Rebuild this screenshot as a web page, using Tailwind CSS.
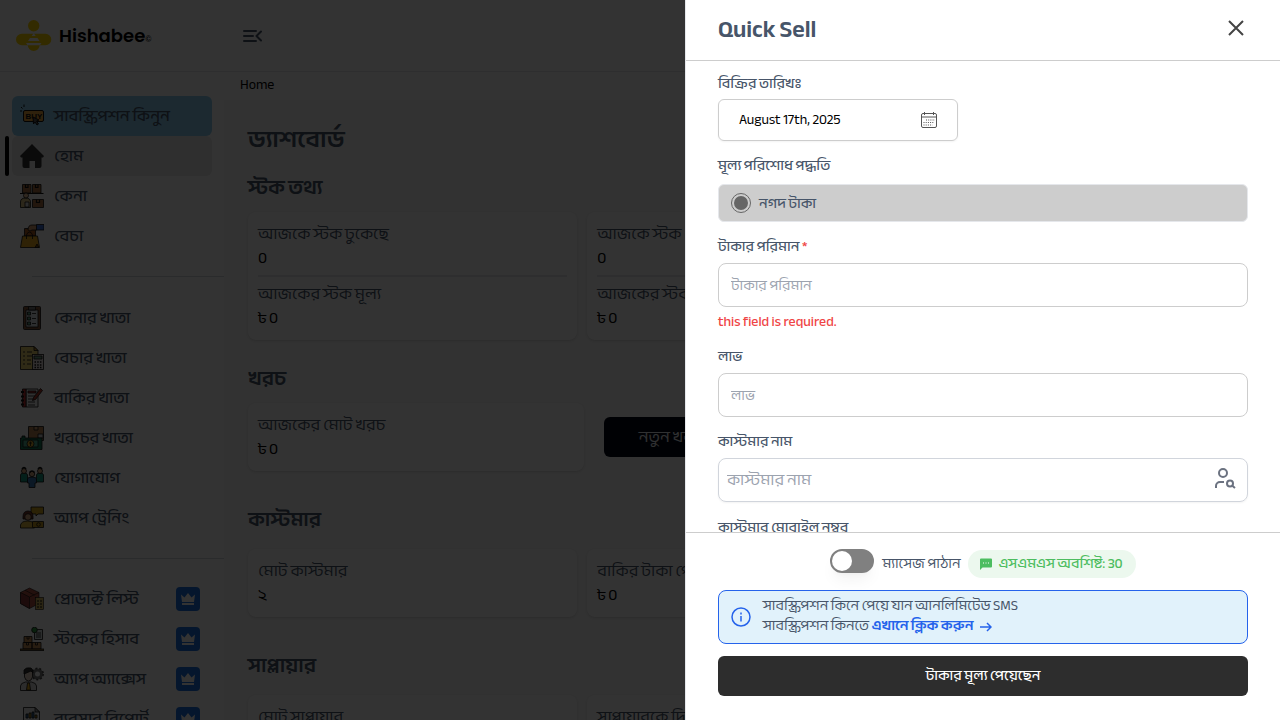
<!DOCTYPE html>
<html lang="bn">
<head>
<meta charset="utf-8">
<meta name="viewport" content="width=device-width, initial-scale=1">
<title>Hishabee</title>
<script src="https://cdn.jsdelivr.net/npm/@tailwindcss/browser@4"></script>
</head>
<body class="h-screen overflow-hidden bg-white font-['Anek_Bangla','Noto_Sans_Bengali','Open_Sans',sans-serif] text-black">

<svg class="hidden" aria-hidden="true">
  <symbol id="crown" viewBox="0 0 24 24">
    <path fill="#fff" d="M5 7.500l3.500 3L12 6l3.500 4.500 3.500-3L18 15H6zM6 16h12v2H6z"/>
  </symbol>
</svg>

<div class="flex h-full flex-col" aria-hidden="true">
  <header class="flex h-[72px] shrink-0 items-center border-b border-gray-200">
    <div class="flex w-[224px] items-center gap-[7px] pl-4">
      <svg class="h-8 w-9" viewBox="0 0 36 32">
        <g fill="#ffd500"><circle cx="17.700" cy="5.700" r="5.700"/><path d="M5.800 13.700h23.700a5.800 5.800 0 0 1 0 11.600H5.800a5.800 5.800 0 0 1 0-11.600z"/><path d="M11.700 25h12a6 6 0 0 1-12 0z"/></g>
        <g fill="#fff"><path d="M17.700 13l2 3h-4zM14 18h7.500l2 3h-11.500zM10 23h15.500l-1.500 2.300H11.500z"/></g>
      </svg>
      <span class="pt-1 font-['Poppins','Lato',sans-serif] text-lg font-semibold leading-8">Hishabee<span class="text-[8px] font-normal">©</span></span>
    </div>
    <button class="ml-[18px]" aria-label="Menu">
      <svg class="size-5" viewBox="0 0 20 20" fill="none" stroke="#475569" stroke-width="2" stroke-linecap="round" stroke-linejoin="round"><path d="M2 5h12M2 10h9M2 15h12M19 5.500L14.500 10l4.500 4.500"/></svg>
    </button>
  </header>

  <div class="flex min-h-0 flex-1">
    <nav class="w-56 shrink-0 overflow-hidden pt-6 text-base font-medium text-[#475569]">
      <div class="flex flex-col pr-3">
        <a href="#" class="ml-3 flex h-10 items-center gap-2.5 rounded-md bg-[#8bcdf0] pl-2">
          <svg class="size-6" viewBox="0 0 24 24"><rect x="3.500" y="6.500" width="20" height="11" rx="1.500" fill="#e8a33c" stroke="#111" /><path d="M1 3l1.500 1.500M4 0.500v2.500M0 7h2" stroke="#111"/><text x="5.500" y="15" font-family="Liberation Sans" font-weight="700" font-size="8" fill="#111">BUY</text><path d="M13 13l6 3-2.500 1 2 3-1.500 1-2-3-1.500 2z" fill="#555" stroke="#111"/></svg>
          সাবস্ক্রিপশন কিনুন</a>
        <div class="flex pl-[5px]">
          <span class="mr-[3px] w-1 rounded bg-black"></span>
          <a href="#" class="flex h-10 flex-1 items-center gap-2.5 rounded-md bg-[#e9e9e9] pl-2">
            <svg class="size-6" viewBox="0 0 24 24"><path fill="#333" d="M12 0l12 12-1 1.500h-1.500V22q0 2-2 2H15v-7H9.500v7h-5q-2 0-2-2v-8.500H1L0 12z"/></svg>
            হোম</a>
        </div>
        <a href="#" class="ml-3 flex h-10 items-center gap-2.5 pl-2">
          <svg class="size-6" viewBox="0 0 24 24" stroke="#111" stroke-width=".8"><path fill="#a87040" d="M2.500.500h8.500V9H2.500zM12.500.500H21V9h-8.500zM12.500 15.500h11v8h-11z"/><path d="M5.500.500v3h2.500v-3M15.500.500v3H18v-3M16.500 15.500v3h3v-3M0 9.500h23.500" fill="none" stroke-width="1.200"/><path fill="#d9c080" d="M.500 23.500V18q0-4 5-4t5 4v5.500z"/><circle cx="6" cy="11.500" r="2.500" fill="#e8c39a"/><path fill="#ddd" d="M5 18h4v5H5z"/></svg>
          কেনা</a>
        <a href="#" class="ml-3 flex h-10 items-center gap-2.5 pl-2">
          <svg class="size-6" viewBox="0 0 24 24" stroke="#111" stroke-width=".8"><path fill="#a85a20" d="M4.500 4.500h11V12h-11z"/><path fill="#e8ac20" d="M2.500 12h15l2 11.500H.500z"/><path fill="none" d="M6.500 15v-4q1-3 3-3t3 3v4"/><path fill="#d09a70" d="M8 6q0-5 4-5h5v5h-5l-2 1z"/><path fill="#3b6bd0" d="M16.500.500H24V6h-7.500z"/><path fill="#805010" d="M17 20l2 3.500h-4z"/></svg>
          বেচা</a>
      </div>
      <hr class="my-5 ml-8 border-gray-300">
      <div class="flex flex-col pl-3 pr-3 pt-px">
        <a href="#" class="flex h-10 items-center gap-2.5 pl-2">
          <svg class="size-6" viewBox="0 0 24 24" stroke="#111" stroke-width=".8"><rect x="3.500" y=".500" width="17" height="23" rx="1" fill="#80563a"/><path fill="#dfe5e8" d="M6 4h12v17H6z"/><path fill="#777" d="M8.500.500h7V4h-7z"/><path fill="#5aa080" d="M7.500 6h3v3h-3zM7.500 11h3v3h-3zM7.500 16h3v3h-3z"/><path d="M12 7.500h4M12 12.500h4M12 17.500h4"/></svg>
          কেনার খাতা</a>
        <a href="#" class="flex h-10 items-center gap-2.5 pl-2">
          <svg class="size-6" viewBox="0 0 24 24" stroke="#111" stroke-width=".8"><path fill="#e8d070" d="M.500.500H14l4 4v19H.500z"/><path fill="#c09030" d="M14 .500v4h4z"/><path d="M3 6h2M7 6h5M3 10h2M7 10h5M3 14h2M7 14h4M3 18h2M7 18h4"/><rect x="12.500" y="8.500" width="11" height="15" fill="#e8e0e0"/><path fill="#70a080" d="M14 10h8v3h-8z"/><path d="M14.500 16h7M14.500 19h7M14.500 21.500h7" stroke-width="1.500" stroke-dasharray="1.500 1.200"/></svg>
          বেচার খাতা</a>
        <a href="#" class="flex h-10 items-center gap-2.5 pl-2">
          <svg class="size-6" viewBox="0 0 24 24" stroke="#111" stroke-width=".8"><path fill="#eee" d="M6 3h12v18H6z"/><path fill="#c03030" d="M2.500 3H6v18H2.500zM8 5h8v2H8z"/><path d="M1 6h3M1 10.500h3M1 14.500h3M1 18.500h3" stroke-width="1.800"/><path d="M8 10h7M8 13h7M8 16h7M8 19h7"/><path fill="#b03a2a" d="M20.500 2.500l2 2-7 9-3 1 1-3z"/></svg>
          বাকির খাতা</a>
        <a href="#" class="flex h-10 items-center gap-2.5 pl-2">
          <svg class="size-6" viewBox="0 0 24 24" stroke="#111" stroke-width=".8"><path fill="#b88450" d="M8.500.500h15v14h-15z"/><path fill="#d0a070" d="M14 .500h4V4h-4z"/><path fill="#ccc" d="M18 8h5v4h-5z"/><path fill="#177a58" d="M2 10h3v2h17v11.500H.500V12H2z"/><path fill="#50b090" d="M3 14h15v7H3z"/><circle cx="10.500" cy="17.800" r="3.500" fill="#e0b030"/><path d="M10.500 15.500v4.500M9 17h3"/></svg>
          খরচের খাতা</a>
        <a href="#" class="flex h-10 items-center gap-2.5 pl-2">
          <svg class="size-6" viewBox="0 0 24 24" stroke="#111" stroke-width=".8"><path fill="#159a80" d="M.500 16V9q0-2 3.500-2t3.500 2v7zM16.500 16V9q0-2 3.500-2t3.500 2v7z"/><circle cx="4" cy="5" r="2.500" fill="#d8a880"/><circle cx="20" cy="5" r="2.500" fill="#d8a880"/><path fill="#3b7ab8" d="M7.500 17v-4q0-2 4.500-2t4.500 2v4h-1.500v4.500H9V17z"/><circle cx="12" cy="8" r="2.700" fill="#d8a880"/><path d="M2 3q2-3 4 0M18 3q2-3 4 0M9.500 6.500q2.500-3 5 0" fill="none" stroke-width="1.500"/></svg>
          যোগাযোগ</a>
        <a href="#" class="flex h-10 items-center gap-2.5 pl-2">
          <svg class="size-6" viewBox="0 0 24 24" stroke="#111" stroke-width=".8"><path fill="#d8a820" d="M11 1h12.500v7H18l-2 2V8h-5z"/><path fill="#e0b840" d="M.500 22v-3q1-4 7-4t7 4v3z"/><path fill="#7a3828" d="M3 11q0-6 5-6t5 6v2H3z"/><circle cx="8" cy="11" r="3.300" fill="#d8a880"/><path fill="#c89a20" d="M12.500 15.500h11v6h-11z"/><circle cx="18.500" cy="18.500" r="1.800" fill="none"/></svg>
          অ্যাপ ট্রেনিং</a>
      </div>
      <hr class="my-5 ml-8 border-gray-300">
      <div class="flex flex-col pl-3 pr-6">
        <a href="#" class="flex h-10 shrink-0 items-center gap-2.5 pl-2">
          <svg class="size-6" viewBox="0 0 24 24" stroke="#111" stroke-width=".6"><path fill="#b05040" d="M9.500 1L19 5.500v11L9.500 21.500.500 16.500v-11z"/><path fill="#8a3838" d="M.500 5.500l9 4.500v11.500l-9-5z"/><path fill="none" d="M9.500 10L19 5.500M5 3.200l9.500 5"/><rect x="15.500" y="10.500" width="8" height="12" fill="#d8b860"/><path d="M17 14h2M17 17h2M17 20h2M20 14h2M20 17h2M20 20h2" stroke-width="1.200"/></svg>
          <span class="flex-1">প্রোডাক্ট লিস্ট</span>
          <svg class="size-6 rounded bg-[#1d6fe0]"><use href="#crown"/></svg></a>
        <a href="#" class="flex h-10 shrink-0 items-center gap-2.5 pl-2">
          <svg class="size-6" viewBox="0 0 24 24" stroke="#111" stroke-width=".8"><path fill="#c89058" d="M4 9.500h8v6H4zM3 15.500h9V22H3zM12 15.500h9V22h-9z"/><path d="M7 9.500v2.500h2V9.500M6.500 15.500V18h2v-2.500M15.500 15.500V18h2v-2.500" fill="none"/><path fill="#d8e0e0" d="M14.500 2.500h8v10h-8z"/><path d="M16 6h5M16 8h5M16 10h5"/><circle cx="14.500" cy="3" r="2.800" fill="#30a040"/><path fill="#a07030" d="M0 22h24v1.500H0z"/></svg>
          <span class="flex-1">স্টকের হিসাব</span>
          <svg class="size-6 rounded bg-[#1d6fe0]"><use href="#crown"/></svg></a>
        <a href="#" class="flex h-10 shrink-0 items-center gap-2.5 pl-2">
          <svg class="size-6" viewBox="0 0 24 24" stroke="#111" stroke-width=".8"><circle cx="17.500" cy="7" r="4" fill="none" stroke="#777" stroke-width="3"/><circle cx="17.500" cy="7" r="5.700" fill="none" stroke="#444" stroke-width="1.500" stroke-dasharray="2 2"/><path fill="#ddd" d="M.500 23.500V19q0-3 5-4h6q5 1 5 4v4.500z"/><path fill="#e8d8c8" d="M4.500 5q0-3 4-3t4 3v5q-1 4-4 4t-4-4z"/><path fill="#333" d="M4 7V3q2-3 7-2 2 1 2 5L11 4z"/><path fill="#e0a820" d="M7.500 16h2l1 7h-4z"/></svg>
          <span class="flex-1">অ্যাপ অ্যাক্সেস</span>
          <svg class="size-6 rounded bg-[#1d6fe0]"><use href="#crown"/></svg></a>
        <a href="#" class="flex h-10 shrink-0 items-center gap-2.5 pl-2">
          <svg class="size-6" viewBox="0 0 24 24" stroke="#111" stroke-width=".8"><path fill="#e8e8e8" d="M3.500.500H15l4.500 4.500v18.500h-16z"/><path fill="#999" d="M15 .500V5h4.500z"/><path fill="#3b7ab8" d="M6 7h2v4H6zM12 5h2v6h-2z"/><path fill="#d8a820" d="M9 6h2v5H9zM15 8h2v3h-2z"/><path d="M6 14h11M6 17h11M6 20h11"/></svg>
          <span class="flex-1">ব্যবসার রিপোর্ট</span>
          <svg class="size-6 rounded bg-[#1d6fe0]"><use href="#crown"/></svg></a>
      </div>
    </nav>

    <div class="flex min-w-0 flex-1 flex-col">
      <div class="flex h-7 shrink-0 items-center bg-white pb-0.5 pl-4 text-sm">Home</div>
      <main class="flex-1 overflow-hidden bg-[#f8f8f8] px-6 pt-6 text-base text-[#475569]">
        <h1 class="h-8 text-2xl font-semibold leading-8">ড্যাশবোর্ড</h1>
        <h2 class="mt-4 h-8 text-xl font-semibold leading-8">স্টক তথ্য</h2>
        <div class="mt-2 grid grid-cols-3 gap-2.5">
          <section class="rounded-lg bg-white p-2.5 shadow-sm">
            <p class="h-6 leading-6">আজকে স্টক ঢুকেছে</p>
            <p class="h-6 leading-6 text-black">0</p>
            <hr class="my-[5px] border-t-2 border-gray-200">
            <p class="h-6 leading-6">আজকের স্টক মূল্য</p>
            <p class="h-6 leading-6 text-black">৳ 0</p>
          </section>
          <section class="rounded-lg bg-white p-2.5 shadow-sm">
            <p class="h-6 leading-6">আজকে স্টক বের হয়েছে</p>
            <p class="h-6 leading-6 text-black">0</p>
            <hr class="my-[5px] border-t-2 border-gray-200">
            <p class="h-6 leading-6">আজকের স্টক মূল্য</p>
            <p class="h-6 leading-6 text-black">৳ 0</p>
          </section>
        </div>
        <h2 class="mt-[23px] h-8 text-xl font-semibold leading-8">খরচ</h2>
        <div class="mt-2 grid grid-cols-3 items-center">
          <section class="rounded-lg bg-white p-2.5 shadow-sm">
            <p class="h-6 leading-6">আজকের মোট খরচ</p>
            <p class="h-6 leading-6 text-black">৳ 0</p>
          </section>
          <button class="ml-5 h-10 w-[206px] rounded-md bg-[#020617] text-slate-100">নতুন খরচ যোগ করুন</button>
        </div>
        <h2 class="mt-[33px] h-8 text-xl font-semibold leading-8">কাস্টমার</h2>
        <div class="mt-[13px] grid grid-cols-3 gap-2.5">
          <section class="rounded-lg bg-white p-2.5 shadow-sm">
            <p class="h-6 leading-6">মোট কাস্টমার</p>
            <p class="h-6 leading-6 text-black">২</p>
          </section>
          <section class="rounded-lg bg-white p-2.5 shadow-sm">
            <p class="h-6 leading-6">বাকির টাকা পেয়েছি</p>
            <p class="h-6 leading-6 text-black">৳ 0</p>
          </section>
        </div>
        <h2 class="mt-[33px] h-8 text-xl font-semibold leading-8">সাপ্লায়ার</h2>
        <div class="mt-[13px] grid grid-cols-3 gap-2.5">
          <section class="rounded-lg bg-white p-2.5 shadow-sm">
            <p class="h-6 leading-6">মোট সাপ্লায়ার</p>
            <p class="h-6 leading-6 text-black">০</p>
          </section>
          <section class="rounded-lg bg-white p-2.5 shadow-sm">
            <p class="h-6 leading-6">সাপ্লায়ারকে দিয়েছি</p>
            <p class="h-6 leading-6 text-black">৳ 0</p>
          </section>
        </div>
      </main>
    </div>
  </div>
</div>

<div class="fixed inset-0 bg-black/80"></div>

<aside role="dialog" aria-labelledby="title" class="fixed inset-y-0 right-0 flex w-[595px] max-w-full flex-col border-l border-gray-200 bg-white text-sm text-[#475569]">
  <header class="flex h-[61px] shrink-0 items-center justify-between border-b border-[#cdcdcd] px-8">
    <h2 id="title" class="text-2xl font-semibold">Quick Sell</h2>
    <button aria-label="Close" class="pb-1 text-[#444]">
      <svg class="size-6" viewBox="0 0 24 24" fill="none" stroke="currentColor" stroke-width="2"><path d="M5 5l14 14M19 5L5 19"/></svg>
    </button>
  </header>

  <form class="min-h-0 flex-1 overflow-hidden px-8 pt-[13px]">
    <label for="date" class="block h-5 font-medium leading-5">বিক্রির তারিখঃ</label>
    <button id="date" type="button" class="mt-[5px] flex h-[42px] w-60 items-center justify-between rounded-md border border-[#cdcdcd] px-5 text-black shadow-xs">
      August 17th, 2025
      <svg class="size-4" viewBox="0 0 16 16" fill="none" stroke="#555"><rect x=".500" y="1.500" width="15" height="14" rx="1.500"/><path d="M.500 5h15M3.500 0v3M12.500 0v3"/><path d="M5 8h9M2.500 10.500h11M2.500 13h9" stroke-dasharray="1 1.200"/></svg>
    </button>
    <fieldset class="mt-[15px]">
      <legend class="h-5 font-medium leading-5">মূল্য পরিশোধ পদ্ধতি</legend>
      <label class="mt-2 flex h-[38px] items-center gap-2 rounded-md border border-gray-200 bg-[#cdcdcd] px-3 font-medium">
        <input type="radio" name="pay" checked class="size-5 appearance-none rounded-full border border-[#666] bg-[#666] bg-clip-content p-0.5">
        <span class="pt-0.5">নগদ টাকা</span>
      </label>
    </fieldset>
    <label for="amount" class="mt-[15px] block h-5 font-medium leading-5">টাকার পরিমান <span class="text-[#ef4444]">*</span></label>
    <input id="amount" type="text" placeholder="টাকার পরিমান" class="mt-1.5 block h-11 w-full rounded-lg border border-[#cdcdcd] px-3 placeholder:text-[#9ca3af]">
    <p class="mt-[5px] h-5 font-medium leading-5 text-[#ef4444]">this field is required.</p>
    <label for="profit" class="mt-[15px] block h-5 font-medium leading-5">লাভ</label>
    <input id="profit" type="text" placeholder="লাভ" class="mt-1.5 block h-11 w-full rounded-lg border border-[#cdcdcd] px-3 placeholder:text-[#9ca3af]">
    <label for="customer" class="mt-[15px] block h-5 font-medium leading-5">কাস্টমার নাম</label>
    <div class="mt-1.5 flex h-11 items-center rounded-lg border border-gray-300 pl-2 pr-2.5 shadow-xs">
      <input id="customer" type="text" placeholder="কাস্টমার নাম" class="h-full min-w-0 flex-1 text-base outline-none placeholder:text-[#9ca3af]">
      <svg class="mb-1 size-6" viewBox="0 0 24 24" fill="none" stroke="#6b7280" stroke-width="2"><circle cx="10" cy="7" r="4"/><path d="M3 22v-2a4 4 0 0 1 4-4h4"/><circle cx="17" cy="17.500" r="3"/><path d="M19 19.500l3 2.500"/></svg>
    </div>
    <label for="mobile" class="mt-4 block h-5 font-medium leading-5">কাস্টমার মোবাইল নম্বর</label>
    <input id="mobile" type="text" class="mt-1.5 block h-11 w-full rounded-lg border border-[#cdcdcd] px-3">
  </form>

  <footer class="shrink-0 border-t border-[#cdcdcd] px-8 pb-6 pt-[17px]">
    <div class="flex h-7 items-center justify-center gap-2">
      <input id="sms" type="checkbox" role="switch" class="mb-1.5 h-6 w-11 appearance-none rounded-full border-2 border-[#808080] bg-[#808080] shadow-lg shadow-black/5 before:block before:size-5 before:rounded-full before:bg-white">
      <label for="sms">ম্যাসেজ পাঠান</label>
      <span class="flex h-7 items-center gap-1.5 rounded-full bg-[#ecf8ee] pl-3 pr-[13px] font-medium text-[#4dbd60]">
        <svg class="size-3" viewBox="0 0 12 12" fill="#4dbd60"><path d="M1 .500h10q1 0 1 1v7q0 1-1 1H2.500L0 12V1.500q0-1 1-1z"/><path fill="#fff" d="M3 4.500h1v1H3zM5.500 4.500h1v1h-1zM8 4.500h1v1H8z"/></svg>
        এসএমএস অবশিষ্ট: 30
      </span>
    </div>
    <div class="mt-3 flex h-[54px] items-center gap-3 rounded-lg border border-[#2563eb] bg-[#e1f2fb] px-3">
      <svg class="size-5 shrink-0" viewBox="0 0 20 20" fill="none" stroke="#2563eb" stroke-width="1.500"><circle cx="10" cy="10" r="9"/><path d="M10 9v5.500M10 5.500v2"/></svg>
      <p class="pb-0.5 leading-5">সাবস্ক্রিপশন কিনে পেয়ে যান আনলিমিটেড SMS<br>
        সাবস্ক্রিপশন কিনতে <a href="#" class="font-semibold text-[#2563eb]">এখানে ক্লিক করুন
        <svg class="ml-1 inline size-3" viewBox="0 0 12 12" fill="none" stroke="currentColor" stroke-width="1.500"><path d="M0 6h11M7 2l4 4-4 4"/></svg></a></p>
    </div>
    <button class="mt-3 h-10 w-full rounded-md bg-[#2d2d2d] font-medium text-white">টাকার মূল্য পেয়েছেন</button>
  </footer>
</aside>
</body>
</html>
